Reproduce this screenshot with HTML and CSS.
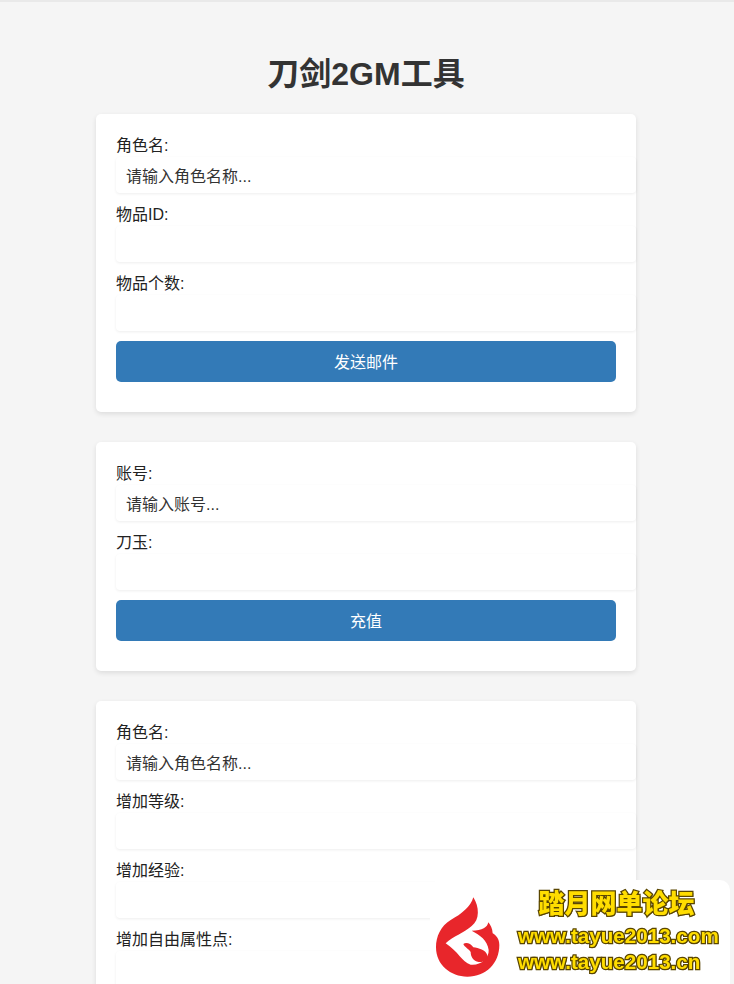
FILE: index.html
```html
<!DOCTYPE html>
<html lang="zh-CN">
<head>
<meta charset="utf-8">
<title>刀剑2GM工具</title>
<link rel="stylesheet" href="styles.css">
</head>
<body>
<div class="page">
  <h1 class="title">刀剑2GM工具</h1>
  <main class="stack">
    <form class="card">
      <label class="field-label">角色名:</label>
      <input class="field" type="text" placeholder="请输入角色名称...">
      <label class="field-label">物品ID:</label>
      <input class="field" type="text">
      <label class="field-label">物品个数:</label>
      <input class="field" type="text">
      <button class="submit" type="button">发送邮件</button>
    </form>
    <form class="card">
      <label class="field-label">账号:</label>
      <input class="field" type="text" placeholder="请输入账号...">
      <label class="field-label">刀玉:</label>
      <input class="field" type="text">
      <button class="submit" type="button">充值</button>
    </form>
    <form class="card">
      <label class="field-label">角色名:</label>
      <input class="field" type="text" placeholder="请输入角色名称...">
      <label class="field-label">增加等级:</label>
      <input class="field" type="text">
      <label class="field-label">增加经验:</label>
      <input class="field" type="text">
      <label class="field-label">增加自由属性点:</label>
      <input class="field" type="text">
    </form>
  </main>
</div>
<aside class="promo">
  <svg class="promo-logo" viewBox="0 0 240 270" aria-hidden="true">
    <path class="flame" d="M130 22C122 50 95 72 62 90C32 108 18 140 18 172C18 225 62 260 112 260C168 260 208 220 208 165C208 147 198 136 188 130C187 115 182 105 175 97C172 112 158 122 125 122C150 135 172 150 176 180C178 205 150 228 122 224C95 215 85 185 47 160C70 138 100 130 125 108C150 90 148 50 130 22Z"/>
    <path class="flame" d="M100 162C108 156 122 160 130 172C145 174 168 180 172 196C174 210 160 218 146 216C130 214 122 200 122 186C116 176 104 172 100 162Z"/>
  </svg>
  <div class="promo-text">
    <div class="promo-name">踏月网单论坛</div>
    <div class="promo-url">www.tayue2013.com</div>
    <div class="promo-url">www.tayue2013.cn</div>
  </div>
</aside>
</body>
</html>
```
FILE: styles.css
```css
* { font-family: "Liberation Sans", "Noto Sans CJK SC", sans-serif; }

html, body {
  margin: 0;
  background: #f5f5f5;
}

.page {
  box-sizing: border-box;
  height: 100vh;
  overflow: hidden;
  border-top: 2px solid #e9e9e9;
  padding: 54px 2px 0 0;
}

.title {
  margin: 0 0 21px;
  font-size: 32px;
  line-height: 37px;
  font-weight: 700;
  color: #333;
  text-align: center;
}

.stack {
  display: flex;
  flex-direction: column;
  gap: 30px;
  width: 540px;
  margin: 0 auto;
}

.card {
  box-sizing: border-box;
  width: 540px;
  padding: 20px;
  background: #fff;
  border-radius: 5px;
  box-shadow: 0 2px 5px rgba(0, 0, 0, 0.1);
}

.field-label {
  display: block;
  font-size: 16px;
  line-height: 23px;
  color: #222;
}

.field {
  display: block;
  width: 100%;
  height: 16px;
  margin: 0 0 10px;
  padding: 12px 10px 8px;
  border: 0;
  border-radius: 4px;
  background: #fff;
  box-shadow: 0 1px 3px rgba(0, 0, 0, 0.07);
  font-size: 16px;
  outline: 0;
}

.field::placeholder {
  color: #333;
  opacity: 1;
}

.submit {
  display: block;
  width: 100%;
  height: 41px;
  margin-bottom: 10px;
  padding: 0 0 2px;
  border: 0;
  border-radius: 5px;
  background: #337ab7;
  color: #fff;
  font-size: 16px;
}

.promo {
  position: fixed;
  left: 430px;
  top: 880px;
  width: 300px;
  height: 104px;
  display: flex;
  align-items: flex-start;
  background: #fff;
  border-radius: 10px 10px 0 0;
}

.promo-logo {
  flex: none;
  width: 80px;
  height: 90px;
  margin-top: 10px;
}

.flame { fill: #e8262b; }

.promo-text {
  display: flex;
  flex-direction: column;
  margin-left: 8px;
  padding-top: 8px;
}

.promo-name {
  width: 202px;
  margin-bottom: 3px;
  padding-right: 5px;
  box-sizing: border-box;
  text-align: center;
  font-size: 26px;
  line-height: 32px;
  font-weight: 900;
  color: #ffdd00;
  -webkit-text-stroke: 2.5px #5a4600;
  paint-order: stroke fill;
  text-shadow: 1px 1px 0 #5a4600;
}

.promo-url {
  font-size: 20.6px;
  line-height: 26px;
  font-weight: 700;
  color: #ffdd00;
  -webkit-text-stroke: 2.5px #5a4600;
  paint-order: stroke fill;
  text-shadow: 1px 1px 0 #5a4600;
  white-space: nowrap;
}
```
